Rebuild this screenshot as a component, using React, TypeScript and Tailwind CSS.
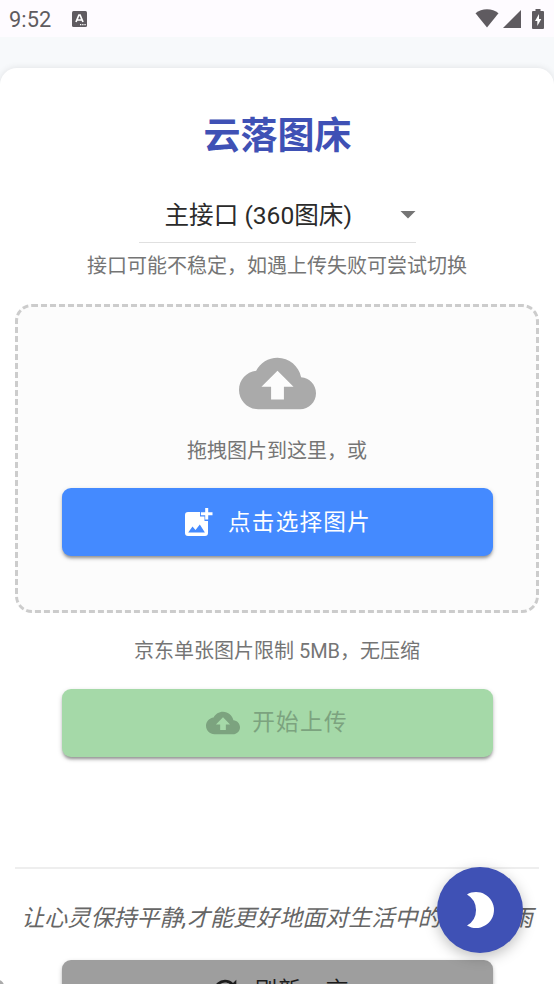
import type { ReactNode } from 'react';

const CLOUD =
  'M19.35 10.04C18.67 6.59 15.64 4 12 4 9.11 4 6.6 5.64 5.35 8.04 2.34 8.36 0 10.91 0 14c0 3.31 2.69 6 6 6h13c2.76 0 5-2.24 5-5 0-2.64-2.05-4.78-4.65-4.96zM14 13v4h-4v-4H7l5-5 5 5h-3z';

function StatusBar() {
  return (
    <header className="flex h-[37px] shrink-0 items-center bg-[#fefbff] pr-[9px] pl-[9px] text-[#5f5b60]">
      <span className="w-[63px] pt-[2px] font-[Roboto] text-[21.8px] leading-none tracking-[0.1px]">9:52</span>
      <svg className="h-4 w-[15px]" viewBox="0 0 15 16" fill="currentColor">
        <rect width="15" height="16" rx="1.5" />
        <path d="M4 11 6.9 4h1.2L11 11M5.3 9h4.4" fill="none" stroke="#fff" strokeWidth="1.7" />
        <path d="M8 13h1.3v1.2H8zM10.2 13h1.3v1.2h-1.3zM12.4 13h1.3v1.2h-1.3z" fill="#fff" />
      </svg>
      <div className="flex-1" />
      <svg className="h-[19px] w-6" viewBox="0 0 24 19" fill="currentColor">
        <path d="M.5 4.2C3.7 1.7 7.6.3 12 .3s8.3 1.4 11.5 3.9L12 18.5z" />
      </svg>
      <svg className="ml-1 h-[18px] w-[18px]" viewBox="0 0 18 18" fill="currentColor">
        <path d="M0 18 18 0v18z" />
      </svg>
      <svg className="mr-px ml-[11px] h-5 w-3" viewBox="0 0 12 20" fill="currentColor">
        <path d="M3.5 0h5v2H11a1 1 0 0 1 1 1v16a1 1 0 0 1-1 1H1a1 1 0 0 1-1-1V3a1 1 0 0 1 1-1h2.5z" />
        <path d="M7 5 3 12h2.3v5L9.3 10H7z" fill="#fff" />
      </svg>
    </header>
  );
}

function ActionButton({ className, children }: { className: string; children: ReactNode }) {
  return (
    <button
      className={
        'flex h-[68px] w-[431px] shrink-0 items-center justify-center rounded-[9px] text-[22.6px] shadow-[0_3px_3px_-1px_rgba(0,0,0,0.3),0_2px_5px_rgba(0,0,0,0.2)] ' +
        className
      }
    >
      {children}
    </button>
  );
}

export default function App() {
  return (
    <div className="relative flex h-[984px] w-[554px] flex-col overflow-hidden bg-[#f7f9fb] font-[Roboto,'Noto_Sans_CJK_SC',sans-serif]">
      <StatusBar />
      <main className="mt-[31px] flex h-[960px] shrink-0 flex-col items-center rounded-t-[17px] bg-white px-[15px] shadow-[0_0_7px_rgba(0,0,0,0.1)]">
        <h1 className="mt-[42px] pl-px text-[37px] leading-[54px] font-bold text-[#3f51b5]">云落图床</h1>
        <div className="mt-[24px] flex h-[55px] w-[277px] items-center border-b-[1.5px] border-[#e0e0e0] pl-[26px] text-[24.6px] whitespace-nowrap text-[#2b2b2b]">
          <span className="flex-1 pt-[2px]">主接口 (360图床)</span>
          <svg className="h-2 w-4" viewBox="0 0 16 8" fill="#757575">
            <path d="M.5 0h15L8 7.6z" />
          </svg>
        </div>
        <p className="mt-[8px] text-[20px] leading-[30px] text-[#757575]">接口可能不稳定，如遇上传失败可尝试切换</p>
        <section className="mt-[23px] flex h-[309px] w-full shrink-0 flex-col items-center rounded-[17px] border-[3px] border-dashed border-[#ccc] bg-[#fcfcfc]">
          <svg className="mt-[38px] h-[77px] w-[77px]" viewBox="0 0 24 24" fill="#aaa">
            <path d={CLOUD} />
          </svg>
          <p className="mt-[14px] mb-[22px] text-[20px] leading-[30px] text-[#757575]">拖拽图片到这里，或</p>
          <ActionButton className="bg-[#448aff] text-white">
            <svg className="mr-[15px] h-7 w-7" viewBox="0 0 28 28" fill="currentColor">
              <path d="M3 4h12v4.5h4.5V13H23v12a3 3 0 0 1-3 3H3a3 3 0 0 1-3-3V7a3 3 0 0 1 3-3z" />
              <path d="M20.2 0h3v4.3h4.3v3h-4.3v4.2h-3V7.3h-4.3v-3h4.3z" />
              <path d="M3.2 24.5 7.5 18.5l3 3.6 4.3-5.6 5.1 8z" fill="#448aff" />
            </svg>
            <span className="-mr-[2px] pt-[2px] tracking-[1.25px]">点击选择图片</span>
          </ActionButton>
        </section>
        <p className="mt-[23px] mb-[23px] text-[20px] leading-[30px] text-[#757575]">京东单张图片限制 5MB，无压缩</p>
        <ActionButton className="bg-[#a5d9a8] text-[#7ca37f]">
          <svg className="mr-[12px] h-[34px] w-[34px]" viewBox="0 0 24 24" fill="currentColor">
            <path d={CLOUD} />
          </svg>
          <span className="tracking-[1.3px]">开始上传</span>
        </ActionButton>
        <footer className="mt-[110px] flex w-full flex-col items-center border-t-2 border-[#eee]">
          <p className="mt-[33px] mb-[24px] text-[23.05px] leading-[34px] whitespace-nowrap text-[#666] italic">
            让心灵保持平静,才能更好地面对生活中的风风雨雨
          </p>
          <ActionButton className="bg-[#9e9e9e] pb-[7px] text-[#1c1c1c]">
            <svg className="mr-[12px] h-[34px] w-[34px]" viewBox="0 0 24 24" fill="currentColor">
              <path d="M17.65 6.35A7.95 7.95 0 0 0 12 4a8 8 0 1 0 7.73 10h-2.08A6 6 0 1 1 12 6c1.66 0 3.14.69 4.22 1.78L13 11h7V4z" />
            </svg>
            <span className="-mr-[4px] tracking-[1.2px]">刷新一言</span>
          </ActionButton>
        </footer>
      </main>
      <button className="absolute top-[867px] left-[437px] flex h-[86px] w-[86px] items-center justify-center rounded-full bg-[#3f51b5] shadow-[0_4px_14px_rgba(0,0,0,0.25)]">
        <svg className="h-9 w-[27px]" viewBox="0 0 27 36" fill="#fff">
          <path d="M0 2.4A18 18 0 1 1 0 33.6 18 18 0 0 0 0 2.4z" />
        </svg>
      </button>
      <div className="absolute -bottom-[8px] -left-[8px] h-3 w-3 rounded-full bg-[#aaa]" />
    </div>
  );
}
